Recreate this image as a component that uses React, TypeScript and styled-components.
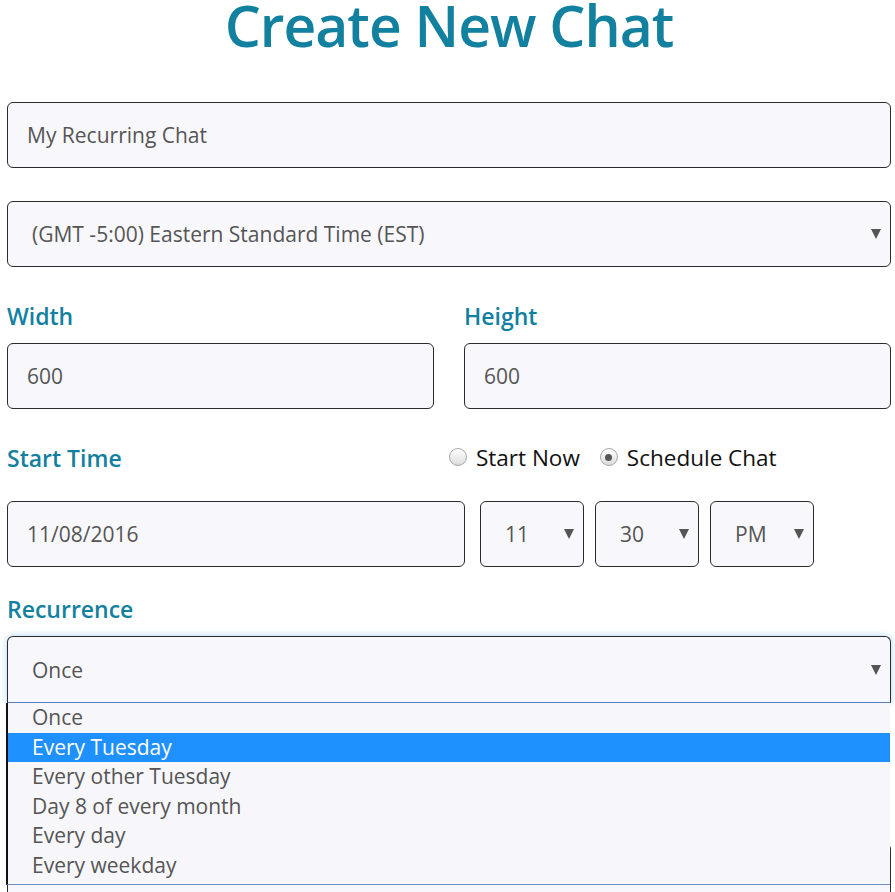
import React from "react";
import styled, { createGlobalStyle } from "styled-components";

const Global = createGlobalStyle`
  html, body { margin: 0; padding: 0; background: #ffffff; }
  body { font-family: "Open Sans", "Noto Sans", sans-serif; overflow: hidden; }
  * { box-sizing: border-box; }
`;

const Page = styled.div`
  width: 895px;
  height: 892px;
  padding: 0 4px 0 7px;
  overflow: hidden;
`;

const Title = styled.h1`
  margin: 0 0 52px;
  text-align: center;
  font-size: 57px;
  line-height: 50px;
  font-weight: 600;
  color: #12809f;
  letter-spacing: -1px;
`;

const Box = styled.div<{ $mt?: number; $focus?: boolean }>`
  position: relative;
  height: 66px;
  margin-top: ${(p) => p.$mt ?? 0}px;
  display: flex;
  align-items: center;
  padding: 0 19px;
  border: 1px solid #2b2b2b;
  border-radius: 6px;
  background: #f8f8fc;
  font-size: 21px;
  color: #555555;
  ${(p) =>
    p.$focus
      ? "height: 67px; box-shadow: 0 0 7px rgba(102, 175, 233, 0.55); border-bottom-left-radius: 0; border-bottom-right-radius: 0; border-bottom-color: #5b7fc0;"
      : ""}
`;

const SelectBox = styled(Box)`
  padding: 0 9px 0 24px;
  justify-content: space-between;
`;

const Arrow = styled.span`
  width: 0;
  height: 0;
  border-left: 5px solid transparent;
  border-right: 5px solid transparent;
  border-top: 10px solid #555555;
`;

const Label = styled.div<{ $mt?: number }>`
  margin-top: ${(p) => p.$mt ?? 0}px;
  height: 30px;
  line-height: 30px;
  font-size: 23px;
  font-weight: 600;
  color: #12809f;
`;

const Pair = styled.div<{ $mt?: number; $gap: number }>`
  display: grid;
  grid-template-columns: 1fr 1fr;
  column-gap: ${(p) => p.$gap}px;
  align-items: center;
  margin-top: ${(p) => p.$mt ?? 0}px;
`;

const Column = styled.div`
  display: flex;
  flex-direction: column;
  gap: 12px;
`;

const Radios = styled.div`
  display: flex;
  align-items: center;
  gap: 20px;
  font-size: 22.5px;
  color: #111111;
  margin-top: -2px;
`;

const RadioItem = styled.label`
  display: flex;
  align-items: center;
  gap: 9px;
`;

const RadioDot = styled.span<{ $checked?: boolean }>`
  position: relative;
  width: 18px;
  height: 18px;
  border-radius: 50%;
  border: 1px solid #a8a8a8;
  background: linear-gradient(#ffffff, #dcdcdc);
  &::after {
    content: "";
    display: ${(p) => (p.$checked ? "block" : "none")};
    position: absolute;
    left: 4.5px;
    top: 4.5px;
    width: 7px;
    height: 7px;
    border-radius: 50%;
    background: #555555;
  }
`;

const TimeRow = styled.div`
  display: flex;
  margin-top: 28px;
  gap: 11px;
`;

const DateBox = styled(Box)`
  flex: 0 0 458px;
  margin-right: 4px;
`;

const SmallSelect = styled(SelectBox)`
  flex: 0 0 104px;
  padding: 0 9px 0 24px;
`;

const DropWrap = styled.div`
  position: relative;
  margin-top: 12px;
`;

const List = styled.div`
  position: absolute;
  left: -1px;
  top: 67px;
  width: 884px;
  padding: 0 0 3px;
  background: #f7f7fb;
  border-left: 2px solid #111111;
  border-bottom: 1px solid #6d8ed0;
  z-index: 2;
`;

const Option = styled.div<{ $active?: boolean }>`
  height: 29.6px;
  line-height: 29.6px;
  padding-left: 24px;
  font-size: 21px;
  color: ${(p) => (p.$active ? "#ffffff" : "#555555")};
  background: ${(p) => (p.$active ? "#1e90ff" : "transparent")};
`;

const TextArea = styled.div`
  margin-top: 140px;
  height: 120px;
  border: 1px solid #2b2b2b;
  border-radius: 6px;
  background: #f8f8fc;
`;

const options = [
  "Once",
  "Every Tuesday",
  "Every other Tuesday",
  "Day 8 of every month",
  "Every day",
  "Every weekday",
];

export default function App() {
  return (
    <Page>
      <Global />
      <Title>Create New Chat</Title>
      <Box>My Recurring Chat</Box>
      <SelectBox $mt={33}>
        <span>(GMT -5:00) Eastern Standard Time (EST)</span>
        <Arrow />
      </SelectBox>

      <Pair $mt={34} $gap={30}>
        <Column>
          <Label>Width</Label>
          <Box>600</Box>
        </Column>
        <Column>
          <Label>Height</Label>
          <Box>600</Box>
        </Column>
      </Pair>

      <Pair $mt={34} $gap={0}>
        <Label>Start Time</Label>
        <Radios>
          <RadioItem>
            <RadioDot />
            Start Now
          </RadioItem>
          <RadioItem>
            <RadioDot $checked />
            Schedule Chat
          </RadioItem>
        </Radios>
      </Pair>

      <TimeRow>
        <DateBox>11/08/2016</DateBox>
        <SmallSelect>
          <span>11</span>
          <Arrow />
        </SmallSelect>
        <SmallSelect>
          <span>30</span>
          <Arrow />
        </SmallSelect>
        <SmallSelect>
          <span>PM</span>
          <Arrow />
        </SmallSelect>
      </TimeRow>

      <Label $mt={27}>Recurrence</Label>
      <DropWrap>
        <SelectBox $focus>
          <span>Once</span>
          <Arrow />
        </SelectBox>
        <List>
          {options.map((o, i) => (
            <Option key={o} $active={i === 1}>
              {o}
            </Option>
          ))}
        </List>
      </DropWrap>
      <TextArea />
    </Page>
  );
}
